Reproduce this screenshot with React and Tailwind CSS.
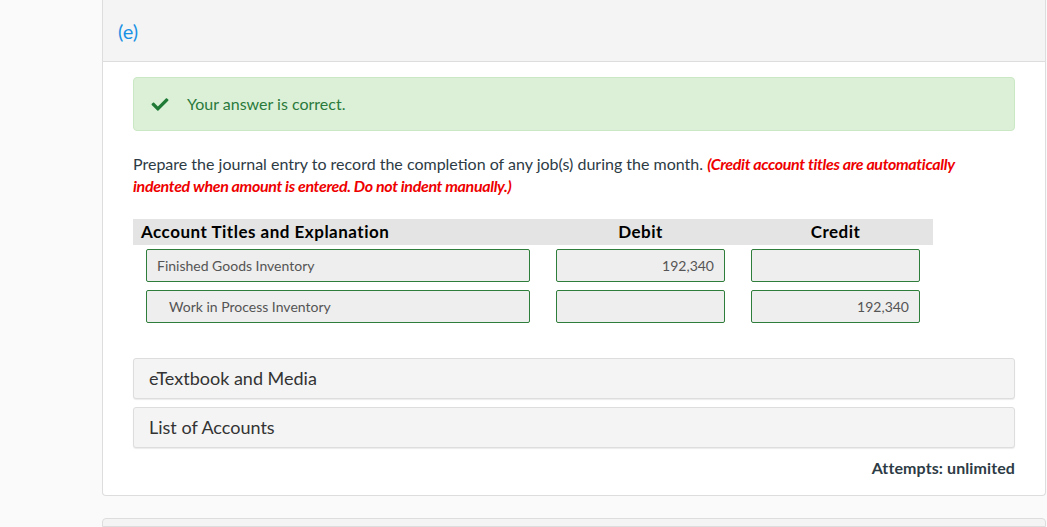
import { FaCheck } from 'react-icons/fa'

const font = { fontFamily: 'Lato, "Open Sans", sans-serif' }

function Field({ value = '', align = 'left', indent = false, width }) {
  return (
    <div
      className={`h-[33px] rounded-[2px] border border-[#2f7d3b] bg-[#eeeeee] flex items-center text-[14px] text-[#555555] ${width} ${align === 'right' ? 'justify-end pr-[10px]' : indent ? 'pl-[22px]' : 'pl-[10px]'}`}
    >
      {value}
    </div>
  )
}

function Panel({ title }) {
  return (
    <div className="h-[41px] rounded-[3px] border border-[#dddddd] bg-[#f4f4f4] shadow-[0_1px_1px_rgba(0,0,0,0.08)] flex items-center pl-[15px] text-[18px] text-[#333333]">
      {title}
    </div>
  )
}

export default function App() {
  return (
    <div className="flex h-[527px] overflow-hidden bg-[#fafafa]" style={font}>
      <div className="w-[102px] shrink-0" />
      <div className="w-[944px] shrink-0 flex flex-col">
        <div className="border border-t-0 border-[#dddddd] rounded-b-[4px] bg-white">
          <div className="h-[62px] bg-[#f4f4f4] border-b border-[#dddddd] flex items-center pl-[15px] text-[20px] text-[#1a91e4]">
            (e)
          </div>
          <div className="px-[30px] pt-[15px] pb-[16px]">
            <div className="h-[54px] rounded-[4px] border border-[#cbe8c4] bg-[#dcf0d8] flex items-center pl-[16px] text-[16px] text-[#2a7a3b]">
              <FaCheck className="w-[20px] h-[17px] text-[#1f7a36]" />
              <span className="ml-[17px]">Your answer is correct.</span>
            </div>

            <p className="mt-[22px] text-[16px] leading-[22px] text-[#2d3b45] w-[840px]">
              Prepare the journal entry to record the completion of any job(s) during the month.{' '}
              <span className="text-[#ee0000] font-bold italic tracking-[-0.35px]">
                (Credit account titles are automatically indented when amount is entered. Do not indent manually.)
              </span>
            </p>

            <div className="mt-[22px] w-[800px]">
              <div className="h-[26px] bg-[#e4e4e4] flex items-center text-[17px] font-bold text-black tracking-[0.5px]">
                <div className="w-[423px] pl-[8px]">Account Titles and Explanation</div>
                <div className="w-[169px] text-center">Debit</div>
                <div className="w-[26px]" />
                <div className="w-[169px] text-center">Credit</div>
              </div>
              <div className="mt-[4px] flex flex-col gap-[8px]">
                <div className="flex items-center pl-[13px]">
                  <Field value="Finished Goods Inventory" width="w-[384px]" />
                  <div className="w-[26px]" />
                  <Field value="192,340" align="right" width="w-[169px]" />
                  <div className="w-[26px]" />
                  <Field width="w-[169px]" />
                </div>
                <div className="flex items-center pl-[13px]">
                  <Field value="Work in Process Inventory" indent width="w-[384px]" />
                  <div className="w-[26px]" />
                  <Field width="w-[169px]" />
                  <div className="w-[26px]" />
                  <Field value="192,340" align="right" width="w-[169px]" />
                </div>
              </div>
            </div>

            <div className="mt-[35px] flex flex-col gap-[8px]">
              <Panel title="eTextbook and Media" />
              <Panel title="List of Accounts" />
            </div>

            <div className="mt-[9px] text-right text-[16px] font-bold text-[#2d3b45] leading-[22px] tracking-[0.1px]">
              Attempts: unlimited
            </div>
          </div>
        </div>
        <div className="mt-[22px] h-[40px] border border-[#dddddd] rounded-t-[4px] bg-[#f4f4f4]" />
      </div>
    </div>
  )
}
